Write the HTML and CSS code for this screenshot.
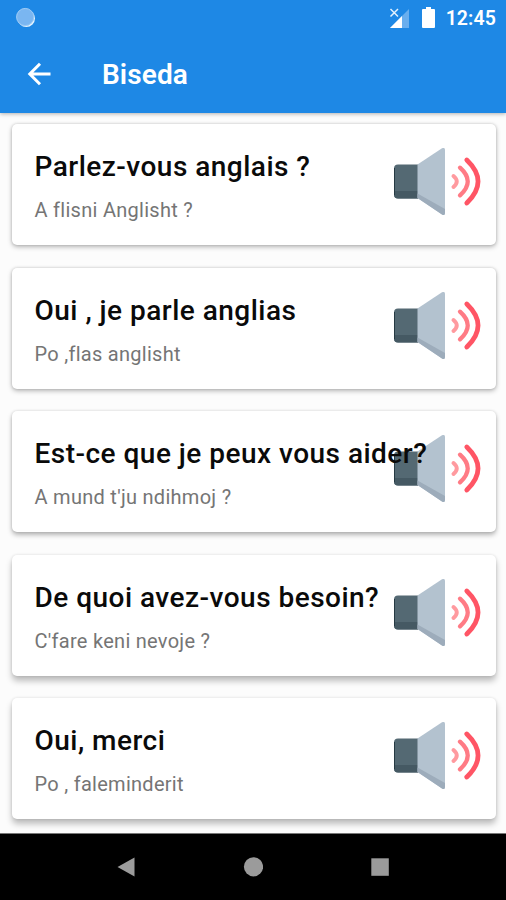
FILE: index.html
```html
<!DOCTYPE html>
<html lang="fr">
<head>
    <meta charset="UTF-8">
    <meta name="viewport" content="width=device-width, initial-scale=1.0">
    <title>Biseda</title>
    <link rel="stylesheet" href="styles.css">
</head>
<body>
    <svg class="sprite" width="0" height="0">
        <symbol id="speaker" viewBox="0 0 90 70">
            <path d="M5 16.500h20v34H5q-4 0-4-4V20.500q0-4 4-4z" fill="#546973"/>
            <path d="M1 43h24v7.500H5q-4 0-4-4z" fill="#455963"/>
            <path d="M1.500 20v27" stroke="#263a43"/>
            <path d="M24.500 16.500L49 .300Q52 -1 52 2V65q0 3-3 1.500L24.500 50z" fill="#b3c2cf"/>
            <path d="M24.500 45.500L52 61V65q0 3-3 1.500L24.500 50z" fill="#9dacbb"/>
            <g fill="none" stroke-linecap="round">
                <path d="M60.500 28q6.500 5.500 0 11" stroke="#ff9a9f" stroke-width="4"/>
                <path d="M67 19.700q15.500 13.800 0 27.600" stroke="#ff7b85" stroke-width="4.300"/>
                <path d="M73.800 12q22.500 21.500 0 43" stroke="#ff5565" stroke-width="4.800"/>
            </g>
        </symbol>
    </svg>

    <header class="header">
        <div class="status">
            <svg class="sync" width="22" height="22" viewBox="0 0 22 22">
                <circle cx="11.300" cy="11.300" r="8.700" fill="#e4f3fe"/>
                <circle cx="10.200" cy="10" r="8.800" fill="#7ab6f1"/>
                <circle cx="10.200" cy="10" r="8.600" fill="none" stroke="#9ccaf5"/>
            </svg>
            <svg class="signal" width="22" height="22" viewBox="0 0 22 22">
                <path d="M20 2v19H1z" fill="#69aeee"/>
                <path d="M13 9v12H1z" fill="#fff"/>
                <path d="M1.500 2l7.500 7.500M9 2L1.500 9.500" stroke="#1e88e5" stroke-width="4"/>
                <path d="M1.500 2l7.500 7.500M9 2L1.500 9.500" stroke="#e3f1fd" stroke-width="1.500"/>
            </svg>
            <svg class="battery" width="13" height="22" viewBox="0 0 13 22">
                <path d="M4 0h5v2h3q1 0 1 1v17q0 1-1 1H1q-1 0-1-1V3q0-1 1-1h3z" fill="#fff"/>
            </svg>
            <span class="clock">12:45</span>
        </div>
        <div class="toolbar">
            <svg class="back" width="24" height="24" viewBox="0 0 24 24">
                <path d="M23.500 12H3M13 1.800L2.800 12l10.200 10.200" fill="none" stroke="#fff" stroke-width="3"/>
            </svg>
            <h1 class="title">Biseda</h1>
        </div>
    </header>

    <main class="list">
        <div class="card high">
            <svg class="speaker"><use href="#speaker"/></svg>
            <h2 class="phrase">Parlez-vous anglais ?</h2>
            <p class="translation">A flisni Anglisht ?</p>
        </div>
        <div class="card high">
            <svg class="speaker"><use href="#speaker"/></svg>
            <h2 class="phrase">Oui , je parle anglias</h2>
            <p class="translation">Po ,flas anglisht</p>
        </div>
        <div class="card">
            <svg class="speaker"><use href="#speaker"/></svg>
            <h2 class="phrase">Est-ce que je peux vous aider?</h2>
            <p class="translation">A mund t'ju ndihmoj ?</p>
        </div>
        <div class="card low">
            <svg class="speaker"><use href="#speaker"/></svg>
            <h2 class="phrase">De quoi avez-vous besoin?</h2>
            <p class="translation">C'fare keni nevoje ?</p>
        </div>
        <div class="card low">
            <svg class="speaker"><use href="#speaker"/></svg>
            <h2 class="phrase">Oui, merci</h2>
            <p class="translation">Po , faleminderit</p>
        </div>
    </main>

    <nav class="navbar">
        <svg width="20" height="20" viewBox="0 0 20 20"><path d="M1.500 10L18.500 .500v19z" fill="#9b9b9b"/></svg>
        <svg width="20" height="20" viewBox="0 0 20 20"><circle cx="10.500" cy="9.800" r="9.600" fill="#9b9b9b"/></svg>
        <svg width="20" height="20" viewBox="0 0 20 20"><path d="M1.300 1.300h17.500V18.800H1.300z" fill="#9b9b9b"/></svg>
    </nav>
</body>
</html>
```

FILE: styles.css
```css
* {
    box-sizing: border-box;
}
body {
    margin: 0;
    height: 900px;
    display: flex;
    flex-direction: column;
    overflow: hidden;
    font-family: Roboto, sans-serif;
    background-color: #fcfcfc;
}
h1, h2, p {
    margin: 0;
}
.sprite {
    display: none;
}
.header {
    height: 113px;
    flex: none;
    color: white;
    background-color: #1e88e5;
    box-shadow: 0 1px 4px rgba(0, 0, 0, 0.3);
    z-index: 1;
}
.status {
    height: 36px;
    display: flex;
    align-items: center;
    padding: 0 10px 0 15px;
}
.signal {
    margin-left: auto;
    margin-right: 11px;
}
.battery {
    margin-right: 11px;
}
.clock {
    font-size: 19.5px;
    font-weight: 600;
    letter-spacing: 0.1px;
}
.toolbar {
    height: 75px;
    display: flex;
    align-items: center;
    padding-left: 27px;
}
.title {
    margin: 2px 0 0 51px;
    font-size: 28px;
    font-weight: 600;
    letter-spacing: 0.1px;
}
.list {
    flex: 1;
    min-height: 0;
    overflow: hidden;
    display: flex;
    flex-direction: column;
    gap: 22.5px;
    padding: 11px 10px 0 12px;
}
.card {
    position: relative;
    flex: none;
    height: 121px;
    padding: 26px 0 0 22.5px;
    background-color: white;
    border-radius: 5px;
    box-shadow: 0 3px 5px rgba(0, 0, 0, 0.28), 0 0 3px rgba(0, 0, 0, 0.14);
}
.high {
    box-shadow: 0 2px 5px rgba(0, 0, 0, 0.27), 0 0 3px rgba(0, 0, 0, 0.16);
}
.low {
    box-shadow: 0 5px 6px rgba(0, 0, 0, 0.25), 0 0 3px rgba(0, 0, 0, 0.12);
}
/* long phrases run over the speaker */
.speaker {
    position: absolute;
    top: 24px;
    right: 13px;
    width: 90px;
    height: 70px;
}
.phrase {
    position: relative;
    font-size: 28px;
    line-height: 34px;
    font-weight: 500;
    letter-spacing: 0.48px;
    white-space: nowrap;
    color: #0a0a0a;
}
.translation {
    margin-top: 14px;
    font-size: 20px;
    line-height: 24px;
    letter-spacing: 0.28px;
    color: #757575;
}
.navbar {
    flex: none;
    height: 67px;
    display: flex;
    align-items: center;
    justify-content: center;
    gap: 107px;
    background-color: black;
    border-top: 1px solid #777;
    z-index: 1;
}
```
